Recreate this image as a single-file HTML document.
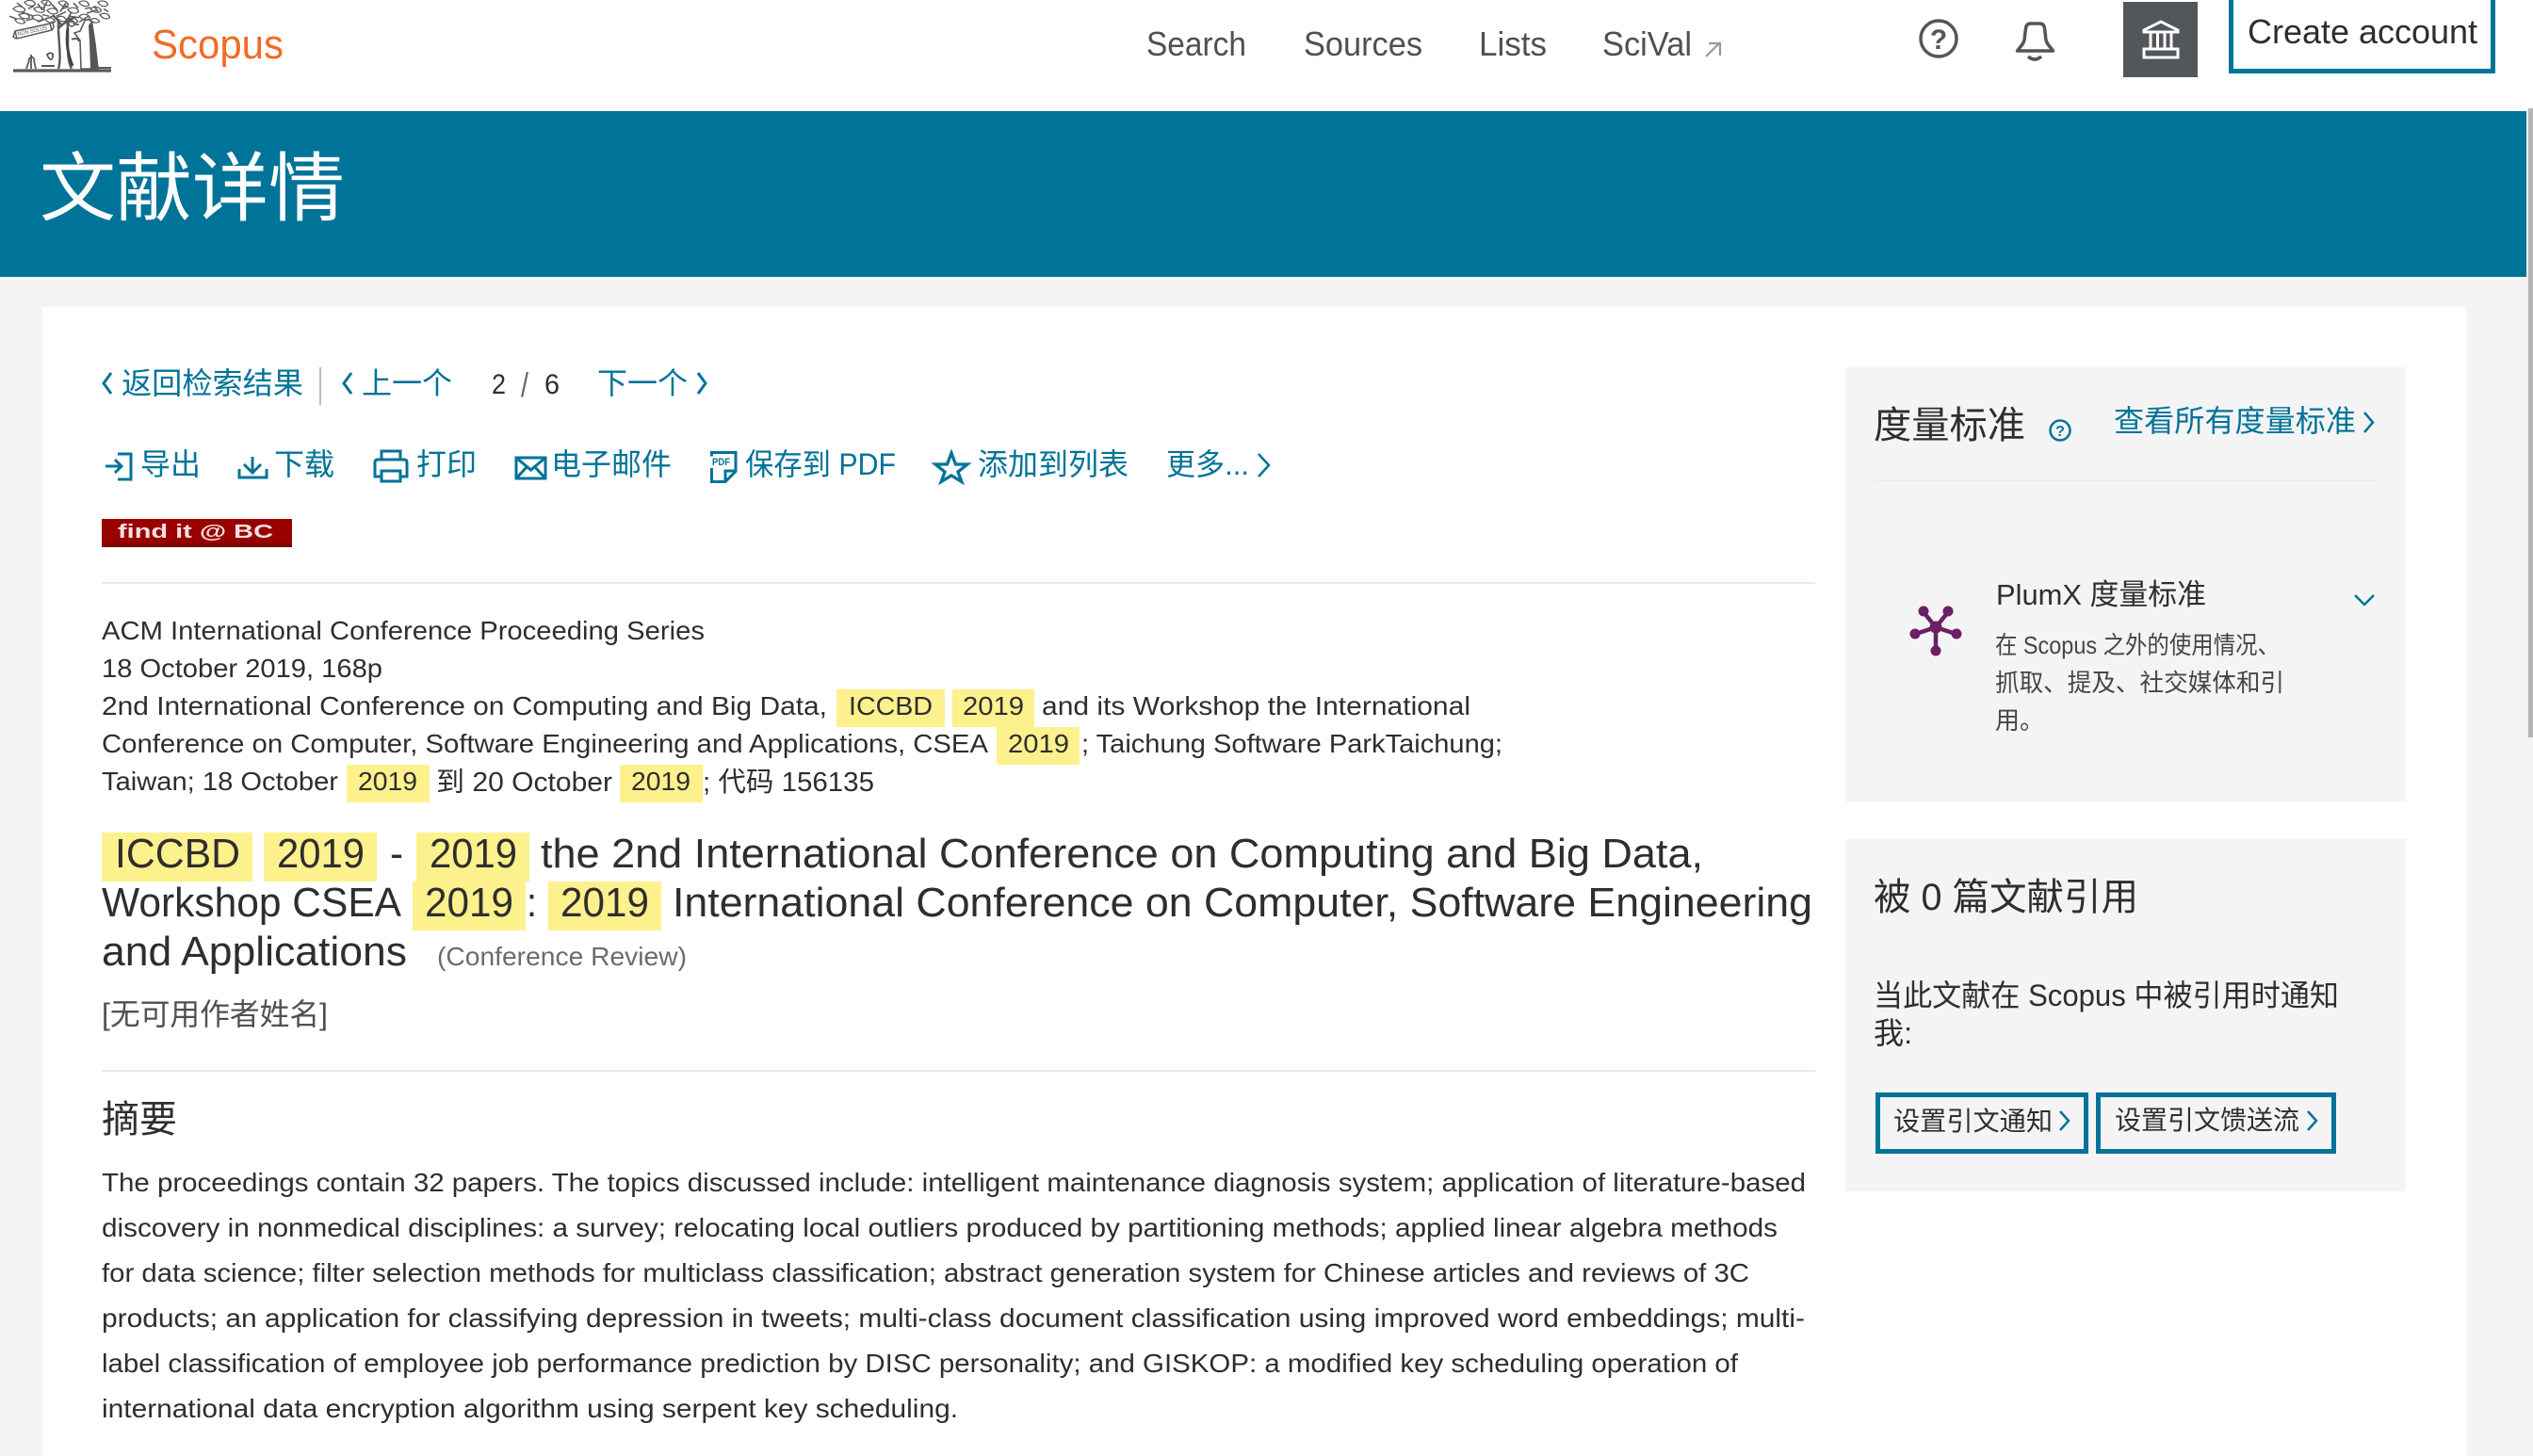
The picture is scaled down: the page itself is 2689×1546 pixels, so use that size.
<!DOCTYPE html>
<html lang="zh"><head><meta charset="utf-8"><title>Scopus - 文献详情</title>
<style>
html,body{margin:0;padding:0;background:#f4f4f4;overflow:hidden;width:2689px;height:1546px}
svg{display:block}
text{font-family:"Liberation Sans","Noto Sans CJK SC",sans-serif;white-space:pre}
.t{fill:#2e2e2e;font-size:28px}
.g{fill:#505050}
.b{fill:#007398}
.h{fill:#fdf18d}
.i{fill:none;stroke:#007398;stroke-width:3}
</style></head><body>
<svg xmlns="http://www.w3.org/2000/svg" width="2689" height="1546" viewBox="0 0 2689 1546">
<rect width="2689" height="1546" fill="#f4f4f4"/>
<rect width="2683" height="118" fill="#fff"/>
<rect x="2683" width="6" height="115" fill="#fff"/>
<rect x="2684" y="115" width="5" height="668" fill="#b4b4b4"/>
<rect y="118" width="2682" height="176" fill="#007398"/>
<rect x="45" y="326" width="2573" height="1220" fill="#fff"/>

<!-- tree logo -->
<g fill="none" stroke="#5a5a5a" stroke-width="1.500">
<g transform="scale(1 .78)">
<path d="M14 12c4-5 9-4 12 0s-6 8-12 0zM26 3c4-4 9-3 11 1s-7 7-11-1zM20 20c5-3 9-2 11 2s-8 6-11-2zM36 12c4-4 9-3 11 1s-7 7-11-1zM44 2c4-3 8-2 10 2s-7 6-10-2zM34 23c4-4 9-3 11 1s-7 7-11-1zM50 14c4-4 9-3 11 1s-7 7-11-1zM62 3c4-3 8-2 10 2s-7 6-10-2zM48 26c4-3 8-2 10 2s-7 5-10-2zM72 13c4-4 9-3 11 1s-7 7-11-1zM84 3c4-3 8-2 10 2s-7 6-10-2zM84 22c4-4 9-3 11 1s-7 7-11-1zM96 12c4-4 9-3 11 1s-7 7-11-1zM104 3c4-3 8-2 10 2s-7 6-10-2zM106 20c4-3 8-2 10 2s-6 6-10-2zM96 27c3-3 7-2 9 1s-6 5-9-1zM60 24c4-3 8-2 10 2s-7 5-10-2zM72 26c4-3 8-2 10 2s-7 5-10-2zM16 27c4-3 8-2 10 2s-7 5-10-2z"/>
<path d="M18 4l6 6M30 12l6-4M40 5l5 9M55 6l6 8M66 12l7-3M78 4l5 7M90 12l6-2M100 8l4 8M45 20l7 2M60 22l10-6M74 22l10 2M28 28l8-3M10 22l8 4M110 12l5 4M22 16l14 6M50 2l-4 10M70 4l-6 12M92 18l10-4M40 30l16-8M70 30l6-14M84 30l10-8" stroke-width="1.800"/>
</g>
<path d="M62 73C66 60 61 40 62 20M76 73c-7-14-2-34-5-53M80 18C72 22 68 24 62 30M56 16c4 4 8 8 10 12" stroke-width="2.400"/>
<path d="M72 30c-2 14 0 28 5 40" stroke-width="3" stroke="#444"/>
<path d="M16 33l37-8 2 7-37 9zM16 33l-2 6 3 2M53 25l3-2 1 6-2 3" stroke-width="1.500"/>
<path d="M14 75h104" stroke-width="3.200"/>
<path d="M33 73V58M28 73l3-9M38 73l-2-9M30 64l3-4M37 64l-3-4M50 58c3-3 7-2 6 2s-3 5-6-2z" stroke-width="1.800"/>
<path d="M44 70h14M104 72h14" stroke-width="2"/>
<path d="M76 42c4-2 7-1 8 2M84 26l-6 0" stroke-width="1.800"/>
<path d="M90 22c4-3 8 0 8 5l3 20 3 26h-18l-1-30-6-8 6-2z" stroke-width="1.600"/>
</g>
<path d="M94 27l2-3c2 1 2 3 2 5l3 18 3 26h-8l-1-28z" fill="#555"/>
<circle cx="76" cy="25" r="3" fill="none" stroke="#555" stroke-width="1.400"/>
<text x="19" y="38" font-size="6" fill="#555" textLength="32" lengthAdjust="spacingAndGlyphs" transform="rotate(-12 19 38)">NON SOLUS</text>

<text x="161" y="62" font-size="44" fill="#f26b27" textLength="140" lengthAdjust="spacingAndGlyphs">Scopus</text>

<!-- nav -->
<g class="g" font-size="36">
<text x="1217" y="59" textLength="106" lengthAdjust="spacingAndGlyphs">Search</text>
<text x="1384" y="59" textLength="126" lengthAdjust="spacingAndGlyphs">Sources</text>
<text x="1570" y="59" textLength="72" lengthAdjust="spacingAndGlyphs">Lists</text>
<text x="1701" y="59" textLength="95" lengthAdjust="spacingAndGlyphs">SciVal</text>
</g>
<path d="M1811 60l15-15M1814 46h12v13" fill="none" stroke="#999" stroke-width="2.200"/>
<circle cx="2058" cy="41" r="19" fill="none" stroke="#53565a" stroke-width="3.500"/>
<text x="2058" y="52" font-size="30" font-weight="700" fill="#53565a" text-anchor="middle">?</text>
<path d="M2141.500 54l5.500-7c2-3 2.500-5 2.500-9l1-8c.5-3 2-5 5-5h10c3 0 4.500 2 5 5l1 8c0 4 .5 6 2.500 9l5.500 7z" fill="none" stroke="#53565a" stroke-width="3.500" stroke-linejoin="round"/>
<path d="M2153 60q7 6 14 0" fill="none" stroke="#53565a" stroke-width="3.500"/>
<rect x="2254" y="2" width="79" height="80" fill="#53565a"/>
<g fill="none" stroke="#fff" stroke-width="3">
<path d="M2276 32l18-9 18 9v2h-36z"/>
<path d="M2283 35v16M2290.500 35v16M2298 35v16M2305 35v16"/>
<rect x="2276" y="52" width="36" height="9"/>
</g>
<rect x="2368.500" y="-4" width="278" height="79.500" fill="#fff" stroke="#007398" stroke-width="5"/>
<text class="t" x="2386" y="46" style="font-size:36px" textLength="244" lengthAdjust="spacingAndGlyphs">Create account</text>

<text x="42" y="228" font-size="80" fill="#fff" textLength="324" lengthAdjust="spacingAndGlyphs">文献详情</text>

<!-- back row -->
<g class="b" font-size="32">
<text x="129" y="418" textLength="193" lengthAdjust="spacingAndGlyphs">返回检索结果</text>
<text x="384" y="418" textLength="96" lengthAdjust="spacingAndGlyphs">上一个</text>
<text x="634" y="418" textLength="96" lengthAdjust="spacingAndGlyphs">下一个</text>
</g>
<g class="t">
<text x="522" y="418" style="font-size:30px" textLength="15" lengthAdjust="spacingAndGlyphs">2</text>
<text x="553" y="421" style="font-size:36px;fill:#666" textLength="8" lengthAdjust="spacingAndGlyphs">/</text>
<text x="578" y="418" style="font-size:30px" textLength="16" lengthAdjust="spacingAndGlyphs">6</text>
</g>
<g class="i" stroke-width="2.500">
<path d="M118 396l-8 11 8 11M373 396l-8 11 8 11M741 396l8 11-8 11"/>
</g>
<rect x="339" y="390" width="2" height="40" fill="#bbb"/>

<!-- actions -->
<g class="b" font-size="32">
<text x="149" y="504" textLength="64" lengthAdjust="spacingAndGlyphs">导出</text>
<text x="291" y="504" textLength="64" lengthAdjust="spacingAndGlyphs">下载</text>
<text x="442" y="504" textLength="64" lengthAdjust="spacingAndGlyphs">打印</text>
<text x="585" y="504" textLength="128" lengthAdjust="spacingAndGlyphs">电子邮件</text>
<text x="791" y="504" textLength="160" lengthAdjust="spacingAndGlyphs">保存到 PDF</text>
<text x="1038" y="504" textLength="160" lengthAdjust="spacingAndGlyphs">添加到列表</text>
<text x="1238" y="504" textLength="88" lengthAdjust="spacingAndGlyphs">更多...</text>
</g>
<g class="i">
<path d="M112 495h17M122 488l7 7-7 7M125 482h14v27h-14"/>
<path d="M254 498v9h29v-9M268 485v17M259 493l9 9 9-9"/>
<path d="M404 506h-6v-15q0-3 3-3h28q3 0 3 3v15h-6M405 488v-9h20v9M405 500h20v11h-20z"/>
<path d="M548 486h31v22h-31zM548 486l15.500 13 15.500-13M548 508l11-12M579 508l-11-12"/>
<path d="M755.500 497v14.500h14.500l11-11v-20h-25.500v4M770 511v-11h11"/>
<path d="M1010 481l4.500 12h12.500l-10 8 3.800 10.500-10.800-6.700-10.800 6.700 3.800-10.500-10-8h12.500z" stroke-width="3.300"/>
<path d="M1336 482l11 12-11 12" stroke-width="2.500"/>
</g>
<text x="756" y="494" font-size="11" font-weight="700" fill="#007398" textLength="19" lengthAdjust="spacingAndGlyphs">PDF</text>

<!-- find it -->
<defs><linearGradient id="fi" x1="0" y1="0" x2="0" y2="1"><stop offset=".82" stop-color="#990000"/><stop offset="1" stop-color="#6f0000"/></linearGradient></defs>
<rect x="108" y="551" width="202" height="30" fill="url(#fi)"/>
<text x="125" y="571" font-size="20" font-weight="700" fill="#f4e2e2" textLength="165" lengthAdjust="spacingAndGlyphs">find it @ BC</text>

<rect x="108" y="618" width="1819" height="2" fill="#e9e9e9"/>

<!-- highlights -->
<rect class="h" x="888" y="732" width="115" height="40"/>
<rect class="h" x="1011" y="732" width="87" height="40"/>
<rect class="h" x="1058" y="772" width="88" height="40"/>
<rect class="h" x="368" y="812" width="88" height="40"/>
<rect class="h" x="658" y="812" width="88" height="40"/>
<rect class="h" x="108" y="884" width="160" height="52"/>
<rect class="h" x="280" y="884" width="120" height="52"/>
<rect class="h" x="442" y="884" width="120" height="52"/>
<rect class="h" x="438" y="936" width="120" height="52"/>
<rect class="h" x="582" y="936" width="120" height="52"/>

<!-- source -->
<g class="t">
<text x="108" y="679" textLength="640" lengthAdjust="spacingAndGlyphs">ACM International Conference Proceeding Series</text>
<text x="108" y="719" textLength="298" lengthAdjust="spacingAndGlyphs">18 October 2019, 168p</text>
<text x="108" y="759" textLength="770" lengthAdjust="spacingAndGlyphs">2nd International Conference on Computing and Big Data,</text>
<text x="901" y="759" textLength="89" lengthAdjust="spacingAndGlyphs">ICCBD</text>
<text x="1022" y="759" textLength="65" lengthAdjust="spacingAndGlyphs">2019</text>
<text x="1106" y="759" textLength="455" lengthAdjust="spacingAndGlyphs">and its Workshop the International</text>
<text x="108" y="799" textLength="941" lengthAdjust="spacingAndGlyphs">Conference on Computer, Software Engineering and Applications, CSEA</text>
<text x="1070" y="799" textLength="65" lengthAdjust="spacingAndGlyphs">2019</text>
<text x="1148" y="799" textLength="447" lengthAdjust="spacingAndGlyphs">; Taichung Software ParkTaichung;</text>
<text x="108" y="839" textLength="251" lengthAdjust="spacingAndGlyphs">Taiwan; 18 October</text>
<text x="380" y="839" textLength="63" lengthAdjust="spacingAndGlyphs">2019</text>
<text x="463" y="840" textLength="187" lengthAdjust="spacingAndGlyphs" style="font-size:29px">到 20 October</text>
<text x="670" y="839" textLength="63" lengthAdjust="spacingAndGlyphs">2019</text>
<text x="746" y="840" textLength="182" lengthAdjust="spacingAndGlyphs" style="font-size:29px">; 代码 156135</text>
</g>

<!-- title -->
<g class="t">
<text style="font-size:44px" x="122" y="921" textLength="133" lengthAdjust="spacingAndGlyphs">ICCBD</text>
<text style="font-size:44px" x="294" y="921" textLength="93" lengthAdjust="spacingAndGlyphs">2019</text>
<text style="font-size:44px" x="414" y="921" textLength="14" lengthAdjust="spacingAndGlyphs">-</text>
<text style="font-size:44px" x="456" y="921" textLength="93" lengthAdjust="spacingAndGlyphs">2019</text>
<text style="font-size:44px" x="574" y="921" textLength="1234" lengthAdjust="spacingAndGlyphs">the 2nd International Conference on Computing and Big Data,</text>
<text style="font-size:44px" x="108" y="973" textLength="318" lengthAdjust="spacingAndGlyphs">Workshop CSEA</text>
<text style="font-size:44px" x="451" y="973" textLength="94" lengthAdjust="spacingAndGlyphs">2019</text>
<text style="font-size:44px" x="559" y="973" textLength="11" lengthAdjust="spacingAndGlyphs">:</text>
<text style="font-size:44px" x="595" y="973" textLength="94" lengthAdjust="spacingAndGlyphs">2019</text>
<text style="font-size:44px" x="714" y="973" textLength="1210" lengthAdjust="spacingAndGlyphs">International Conference on Computer, Software Engineering</text>
<text style="font-size:44px" x="108" y="1025" textLength="324" lengthAdjust="spacingAndGlyphs">and Applications</text>
</g>
<text x="464" y="1025" font-size="28" fill="#6b6b6b" textLength="265" lengthAdjust="spacingAndGlyphs">(Conference Review)</text>
<text x="108" y="1088" font-size="32" fill="#505050" textLength="240" lengthAdjust="spacingAndGlyphs">[无可用作者姓名]</text>
<rect x="108" y="1136" width="1819" height="2" fill="#e9e9e9"/>
<text x="108" y="1202" font-size="40" fill="#2e2e2e" textLength="80" lengthAdjust="spacingAndGlyphs">摘要</text>

<!-- abstract -->
<g class="t">
<text x="108" y="1265" textLength="1809" lengthAdjust="spacingAndGlyphs">The proceedings contain 32 papers. The topics discussed include: intelligent maintenance diagnosis system; application of literature-based</text>
<text x="108" y="1313" textLength="1779" lengthAdjust="spacingAndGlyphs">discovery in nonmedical disciplines: a survey; relocating local outliers produced by partitioning methods; applied linear algebra methods</text>
<text x="108" y="1361" textLength="1749" lengthAdjust="spacingAndGlyphs">for data science; filter selection methods for multiclass classification; abstract generation system for Chinese articles and reviews of 3C</text>
<text x="108" y="1409" textLength="1808" lengthAdjust="spacingAndGlyphs">products; an application for classifying depression in tweets; multi-class document classification using improved word embeddings; multi-</text>
<text x="108" y="1457" textLength="1737" lengthAdjust="spacingAndGlyphs">label classification of employee job performance prediction by DISC personality; and GISKOP: a modified key scheduling operation of</text>
<text x="108" y="1505" textLength="909" lengthAdjust="spacingAndGlyphs">international data encryption algorithm using serpent key scheduling.</text>
</g>

<!-- metrics panel -->
<rect x="1959" y="390" width="595" height="461" fill="#f4f4f4"/>
<text x="1989" y="465" font-size="40" fill="#2e2e2e" textLength="161" lengthAdjust="spacingAndGlyphs">度量标准</text>
<circle cx="2187" cy="457" r="10.500" fill="none" stroke="#007398" stroke-width="2.500"/>
<text x="2187" y="463" font-size="16" font-weight="700" fill="#007398" text-anchor="middle">?</text>
<text class="b" x="2244" y="458" font-size="32" textLength="257" lengthAdjust="spacingAndGlyphs">查看所有度量标准</text>
<path d="M2510 438l9 10.500-9 10.500" fill="none" stroke="#007398" stroke-width="2.500"/>
<rect x="1991" y="509" width="531" height="2" fill="#eeeeee"/>
<g stroke="#6c1f63" fill="#6c1f63" stroke-linecap="round">
<path d="M2042 650l13 16M2068 650l-13 16M2034 673l21-7M2076 673l-21-7M2055 690v-24" stroke-width="4.500"/>
<circle cx="2042" cy="649" r="5.500" stroke="none"/><circle cx="2068" cy="649" r="5.500" stroke="none"/><circle cx="2033" cy="673" r="5.500" stroke="none"/><circle cx="2077" cy="673" r="5.500" stroke="none"/><circle cx="2055" cy="691" r="5.500" stroke="none"/><circle cx="2055" cy="666" r="6.500" stroke="none"/>
</g>
<text class="t" x="2119" y="642" style="font-size:31px" textLength="223" lengthAdjust="spacingAndGlyphs">PlumX 度量标准</text>
<path d="M2500 632l10 10 10-10" fill="none" stroke="#007398" stroke-width="2.500"/>
<g fill="#454545" font-size="26">
<text x="2118" y="694" textLength="302" lengthAdjust="spacingAndGlyphs">在 Scopus 之外的使用情况、</text>
<text x="2118" y="734" textLength="307" lengthAdjust="spacingAndGlyphs">抓取、提及、社交媒体和引</text>
<text x="2118" y="774" textLength="52">用。</text>
</g>

<!-- cited panel -->
<rect x="1959" y="891" width="595" height="374" fill="#f4f4f4"/>
<text x="1989" y="966" font-size="40" fill="#2e2e2e" textLength="281" lengthAdjust="spacingAndGlyphs">被 0 篇文献引用</text>
<text class="t" x="1989" y="1068" style="font-size:32px" textLength="494" lengthAdjust="spacingAndGlyphs">当此文献在 Scopus 中被引用时通知</text>
<text class="t" x="1989" y="1108" style="font-size:32px" textLength="41" lengthAdjust="spacingAndGlyphs">我:</text>
<rect x="1993.500" y="1162.500" width="221" height="60" fill="none" stroke="#007398" stroke-width="5"/>
<rect x="2227.500" y="1162.500" width="250" height="60" fill="none" stroke="#007398" stroke-width="5"/>
<text class="t" x="2010" y="1200" textLength="169" lengthAdjust="spacingAndGlyphs">设置引文通知</text>
<text class="t" x="2245" y="1199" textLength="196" lengthAdjust="spacingAndGlyphs">设置引文馈送流</text>
<path d="M2187 1180l9 10-9 10M2450 1180l9 10-9 10" fill="none" stroke="#007398" stroke-width="2.500"/>
</svg>
</body></html>
